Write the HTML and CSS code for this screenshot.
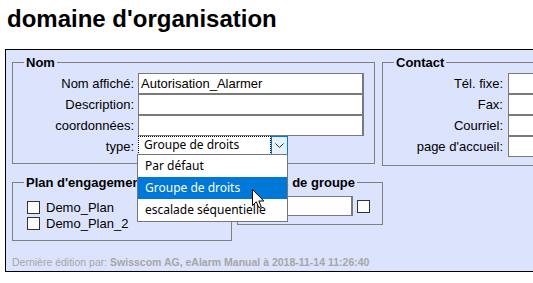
FILE: index.html
```html
<!DOCTYPE html>
<html lang="fr">
<head>
    <meta charset="UTF-8">
    <title>domaine d'organisation</title>
    <link rel="stylesheet" href="styles.css">
</head>
<body>
    <h1 class="title">domaine d'organisation</h1>
    <div class="panel">
        <div class="row row-top">
            <fieldset class="box box-nom">
                <legend>Nom</legend>
                <div class="form-grid">
                    <label>Nom affiché:</label>
                    <div class="field">Autorisation_Alarmer</div>
                    <label>Description:</label>
                    <div class="field"></div>
                    <label>coordonnées:</label>
                    <div class="field"></div>
                    <label>type:</label>
                    <div class="select">
                        <div class="select-text">Groupe de droits</div>
                        <div class="select-btn">
                            <svg width="9" height="6" viewBox="0 0 9 6"><path d="M0.5 0.5 L4.5 4.5 L8.5 0.5" fill="none" stroke="#333" stroke-width="1"/></svg>
                        </div>
                        <div class="dropdown">
                            <div class="option">Par défaut</div>
                            <div class="option active">Groupe de droits</div>
                            <div class="option">escalade séquentielle</div>
                            <svg class="cursor" width="13" height="20" viewBox="0 0 13 20"><path d="M0.5 0.5 L0.5 16.5 L4.3 12.8 L6.8 18.6 L9.2 17.6 L6.8 12 L11.8 12 Z" fill="#fff" stroke="#000" stroke-width="1" stroke-linejoin="miter"/></svg>
                        </div>
                    </div>
                </div>
            </fieldset>
            <fieldset class="box box-contact">
                <legend>Contact</legend>
                <div class="form-grid contact-grid">
                    <label>Tél. fixe:</label>
                    <div class="field"></div>
                    <label>Fax:</label>
                    <div class="field"></div>
                    <label>Courriel:</label>
                    <div class="field"></div>
                    <label>page d'accueil:</label>
                    <div class="field"></div>
                </div>
            </fieldset>
        </div>
        <div class="row row-bottom">
            <fieldset class="box box-plan">
                <legend>Plan d'engagement prévu</legend>
                <div class="check-row"><span class="check"></span>Demo_Plan</div>
                <div class="check-row"><span class="check"></span>Demo_Plan_2</div>
            </fieldset>
            <fieldset class="box box-group">
                <legend>Droits de groupe</legend>
                <div class="group-row">
                    <div class="field field-short"></div>
                    <span class="check"></span>
                </div>
            </fieldset>
        </div>
        <p class="footer">Dernière édition par: <b>Swisscom AG, eAlarm Manual à 2018-11-14 11:26:40</b></p>
    </div>
</body>
</html>
```

FILE: styles.css
```css
html, body { margin: 0; overflow: hidden; }
body { font-family: "Liberation Sans", Arial, sans-serif; font-size: 13px; color: #000; background: #fff; padding: 0 0 0 5px; }
.title { font-size: 24px; font-weight: bold; line-height: 26px; margin: 0 0 17px 2px; padding-top: 6px; }
.panel { width: 640px; box-sizing: border-box; border: 1px solid #000; background: #dce3fd; padding: 5px 0 2px 6px; }

.row { display: flex; align-items: flex-start; }
.row-top { gap: 7px; }
.row-bottom { gap: 5px; margin-top: 9px; }

.box { margin: 0; border: 1px solid #808080; padding: 3px 10px 6px 11px; min-width: 0; }
.box legend { font-weight: bold; padding: 0 2px; line-height: 15px; white-space: nowrap; }
.box-contact { padding-bottom: 8px; }
.box-plan { width: 220px; box-sizing: border-box; padding: 9px 10px 9px 11px; }
.box-group { width: 146px; box-sizing: border-box; padding: 6px 12px 8px 11px; }

.form-grid { display: grid; grid-template-columns: 110px 226px; grid-auto-rows: 21px; column-gap: 4px; }
.contact-grid { grid-template-columns: 109px 100px; column-gap: 5px; }
.form-grid label { text-align: right; align-self: center; }

.field { height: 21px; box-sizing: border-box; border: 1px solid #7a7a7a; border-right-width: 2px; background: #fff; padding-left: 2px; line-height: 19px; }

.select { position: relative; display: flex; width: 150px; height: 19px; align-self: start; background: #fff; }
.select-text { flex: 1; border: 1px dotted #000; font-family: "Noto Sans", sans-serif; font-size: 12px; line-height: 16px; padding-left: 5px; }
.select-btn { width: 15px; border: 1px solid #0078d7; background: #e5f1fb; display: flex; align-items: center; justify-content: center; }

.dropdown { position: absolute; top: 18px; left: -1px; width: 151px; box-sizing: border-box; background: #fff; border: 1px solid #767676; font-family: "Noto Sans", sans-serif; font-size: 12px; z-index: 2; }
.option { height: 22px; line-height: 22px; padding-left: 7px; }
.option.active { background: #0078d7; color: #fff; }
.cursor { position: absolute; left: 114px; top: 34px; }

.check { display: inline-block; width: 13px; height: 13px; box-sizing: border-box; border: 1px solid #333; background: #fff; }
.check-row { display: flex; align-items: center; gap: 6px; height: 16px; padding-left: 3px; }
.group-row { display: flex; align-items: center; gap: 4px; }
.field-short { width: 104px; height: 20px; }

.footer { margin: 15px 0 0; font-size: 10.5px; line-height: 13px; color: #a6a6a6; }
```
